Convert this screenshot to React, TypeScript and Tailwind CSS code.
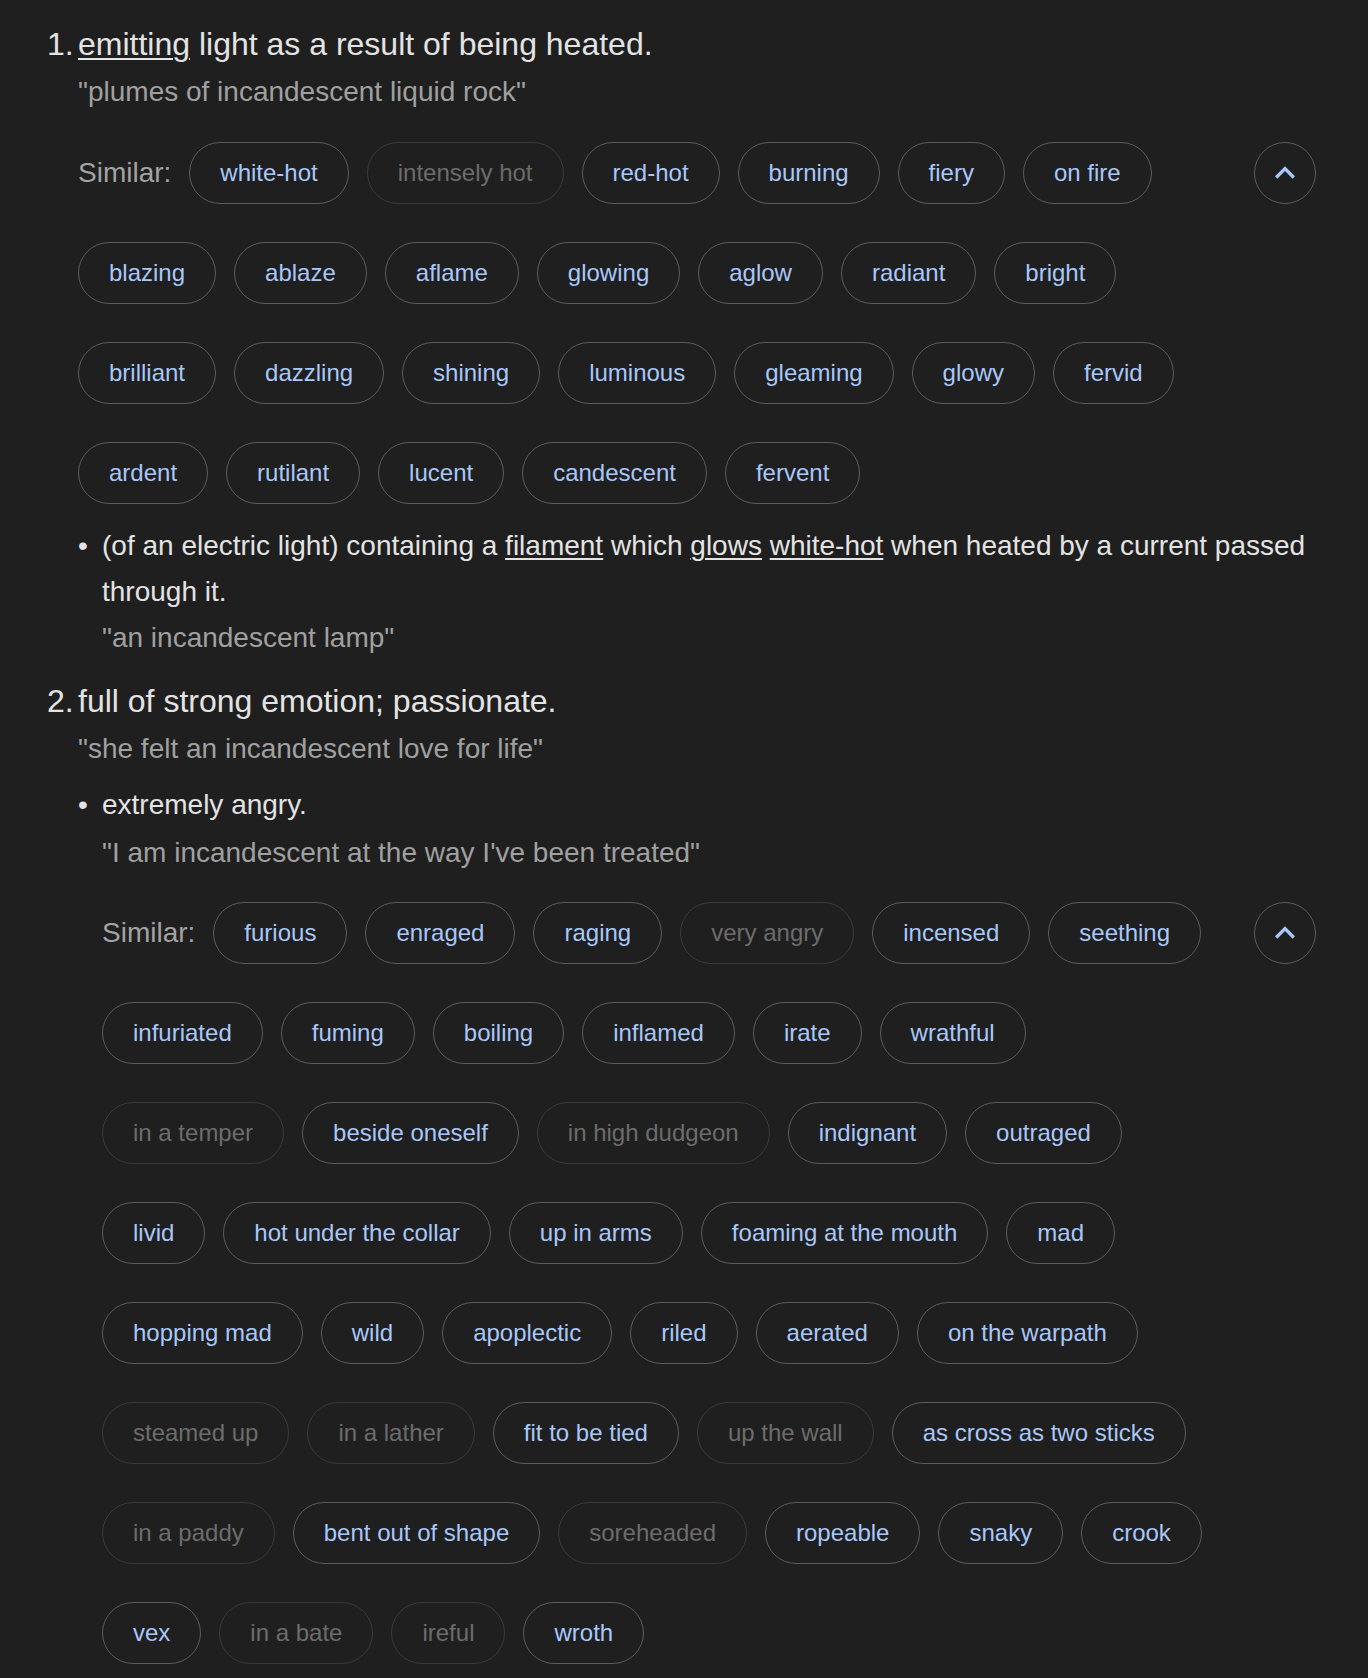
type ChipItem = { label: string; muted?: boolean };

const m = (label: string): ChipItem => ({ label, muted: true });
const c = (label: string): ChipItem => ({ label });

const HEATED: ChipItem[] = [
  c("white-hot"), m("intensely hot"), c("red-hot"), c("burning"), c("fiery"), c("on fire"),
  c("blazing"), c("ablaze"), c("aflame"), c("glowing"), c("aglow"), c("radiant"), c("bright"),
  c("brilliant"), c("dazzling"), c("shining"), c("luminous"), c("gleaming"), c("glowy"), c("fervid"),
  c("ardent"), c("rutilant"), c("lucent"), c("candescent"), c("fervent"),
];

const ANGRY: ChipItem[] = [
  c("furious"), c("enraged"), c("raging"), m("very angry"), c("incensed"), c("seething"),
  c("infuriated"), c("fuming"), c("boiling"), c("inflamed"), c("irate"), c("wrathful"),
  m("in a temper"), c("beside oneself"), m("in high dudgeon"), c("indignant"), c("outraged"),
  c("livid"), c("hot under the collar"), c("up in arms"), c("foaming at the mouth"), c("mad"),
  c("hopping mad"), c("wild"), c("apoplectic"), c("riled"), c("aerated"), c("on the warpath"),
  m("steamed up"), m("in a lather"), c("fit to be tied"), m("up the wall"), c("as cross as two sticks"),
  m("in a paddy"), c("bent out of shape"), m("soreheaded"), c("ropeable"), c("snaky"), c("crook"),
  c("vex"), m("in a bate"), m("ireful"), c("wroth"),
];

function Chip({ item }: { item: ChipItem }) {
  return (
    <span
      className={
        item.muted
          ? "h-[62px] flex items-center px-[30px] rounded-full border border-[#3a3a3a] text-[#6c6c6c] text-[24px] whitespace-nowrap"
          : "h-[62px] flex items-center px-[30px] rounded-full border border-[#5c5c5c] text-[#a8c7fa] text-[24px] whitespace-nowrap"
      }
    >
      {item.label}
    </span>
  );
}

function SimilarGroup({ items }: { items: ChipItem[] }) {
  return (
    <div className="flex items-start gap-[36px]">
      <div className="flex-1 flex flex-wrap gap-x-[18px] gap-y-[38px]">
        <span className="h-[62px] flex items-center text-[28px] text-[#a3a3a3]">Similar:</span>
        {items.map((it) => (
          <Chip key={it.label} item={it} />
        ))}
      </div>
      <button className="w-[62px] h-[62px] shrink-0 rounded-full border border-[#5c5c5c] flex items-center justify-center">
        <svg width="40" height="40" viewBox="0 0 24 24" fill="#a8c7fa">
          <path d="M12 8l-6 6 1.41 1.41L12 10.83l4.59 4.58L18 14z" />
        </svg>
      </button>
    </div>
  );
}

const link = "underline decoration-[1.5px] underline-offset-[3px]";

export default function App() {
  return (
    <div className="min-h-screen bg-[#1f1f1f] pl-[47px] pr-[52px] pt-[24px] pb-[16px] font-['Liberation_Sans',Arial,sans-serif] text-[#e3e3e3]">
      {/* sense 1 */}
      <div className="flex text-[32px] leading-[40px]">
        <span className="w-[31px] shrink-0">1.</span>
        <span>
          <span className={link}>emitting</span> light as a result of being heated.
        </span>
      </div>
      <div className="pl-[31px]">
        <p className="mt-[8px] text-[28px] leading-[40px] text-[#a0a0a0]">"plumes of incandescent liquid rock"</p>
        <div className="mt-[30px]">
          <SimilarGroup items={HEATED} />
        </div>
        <div className="mt-[19px] flex text-[28px] leading-[46px]">
          <span className="w-[24px] shrink-0">•</span>
          <div>
            <p className="leading-[46px]">
              (of an electric light) containing a <span className={link}>filament</span> which{" "}
              <span className={link}>glows</span> <span className={link}>white-hot</span> when heated by a current
              passed through it.
            </p>
            <p className="leading-[46px] text-[#a0a0a0]">"an incandescent lamp"</p>
          </div>
        </div>
      </div>

      {/* sense 2 */}
      <div className="mt-[20px] flex text-[32px] leading-[40px]">
        <span className="w-[31px] shrink-0">2.</span>
        <span>full of strong emotion; passionate.</span>
      </div>
      <div className="pl-[31px]">
        <p className="mt-[8px] text-[28px] leading-[40px] text-[#a0a0a0]">"she felt an incandescent love for life"</p>
        <div className="mt-[13px] flex text-[28px] leading-[46px]">
          <span className="w-[24px] shrink-0">•</span>
          <div className="flex-1">
            <p className="leading-[46px]">extremely angry.</p>
            <p className="mt-[2px] leading-[46px] text-[#a0a0a0]">"I am incandescent at the way I've been treated"</p>
            <div className="mt-[26px]">
              <SimilarGroup items={ANGRY} />
            </div>
          </div>
        </div>
      </div>
    </div>
  );
}
